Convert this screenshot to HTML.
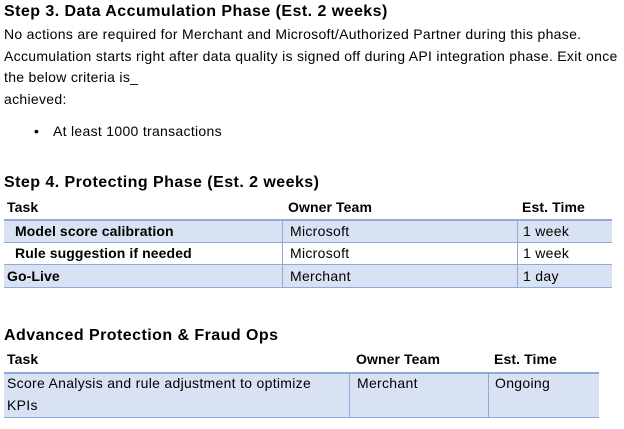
<!DOCTYPE html>
<html><head><meta charset="utf-8"><style>
body{margin:0;width:624px;height:429px;background:#fff;font-family:"Liberation Sans","DejaVu Sans",sans-serif;color:#000;position:relative;overflow:hidden}
.a{position:absolute;white-space:nowrap}
.h{font-weight:bold;font-size:16px;letter-spacing:0.45px}
.t{font-size:14px;letter-spacing:0.3px}
.b{font-weight:bold;font-size:14px;letter-spacing:0.1px}
.fill{position:absolute;background:#d9e2f3}
.hl{position:absolute;height:1px;background:#8eaadb}
.vl{position:absolute;width:1px;background:#8eaadb}
</style></head><body>
<div class="a h" style="left:4px;top:3px">Step 3. Data Accumulation Phase (Est. 2 weeks)</div>
<div class="a t" style="left:4px;top:26px">No actions are required for Merchant and Microsoft/Authorized Partner during this phase.</div>
<div class="a t" style="left:4px;top:48px">Accumulation starts right after data quality is signed off during API integration phase. Exit once</div>
<div class="a t" style="left:4px;top:69px">the below criteria is_</div>
<div class="a t" style="left:4px;top:91px">achieved:</div>
<div class="a t" style="left:34px;top:123px">•</div>
<div class="a t" style="left:53px;top:123px">At least 1000 transactions</div>

<div class="a h" style="left:4px;top:174px">Step 4. Protecting Phase (Est. 2 weeks)</div>
<div class="a b" style="left:7px;top:199px">Task</div>
<div class="a b" style="left:288px;top:199px">Owner Team</div>
<div class="a b" style="left:522px;top:199px">Est. Time</div>
<div class="fill" style="left:4px;top:220px;width:608px;height:67px"></div>
<div class="fill" style="left:4px;top:243px;width:608px;height:21px;background:#fff"></div>
<div class="hl" style="left:4px;top:219px;width:608px;height:2px"></div>
<div class="hl" style="left:4px;top:242px;width:608px"></div>
<div class="hl" style="left:4px;top:264px;width:608px"></div>
<div class="hl" style="left:4px;top:287px;width:608px"></div>
<div class="vl" style="left:282px;top:220px;height:67px"></div>
<div class="vl" style="left:517px;top:220px;height:67px"></div>
<div class="a b" style="left:15px;top:223px">Model score calibration</div>
<div class="a t" style="left:290px;top:223px">Microsoft</div>
<div class="a t" style="left:523px;top:223px">1 week</div>
<div class="a b" style="left:15px;top:245px">Rule suggestion if needed</div>
<div class="a t" style="left:290px;top:245px">Microsoft</div>
<div class="a t" style="left:523px;top:245px">1 week</div>
<div class="a b" style="left:7px;top:268px">Go-Live</div>
<div class="a t" style="left:290px;top:268px">Merchant</div>
<div class="a t" style="left:523px;top:268px">1 day</div>

<div class="a h" style="left:4px;top:327px">Advanced Protection &amp; Fraud Ops</div>
<div class="a b" style="left:7px;top:351px">Task</div>
<div class="a b" style="left:356px;top:351px">Owner Team</div>
<div class="a b" style="left:494px;top:351px">Est. Time</div>
<div class="fill" style="left:4px;top:373px;width:595px;height:44px"></div>
<div class="hl" style="left:4px;top:372px;width:595px;height:2px"></div>
<div class="hl" style="left:4px;top:417px;width:595px"></div>
<div class="vl" style="left:349px;top:373px;height:44px"></div>
<div class="vl" style="left:488px;top:373px;height:44px"></div>
<div class="a t" style="left:7px;top:375px">Score Analysis and rule adjustment to optimize</div>
<div class="a t" style="left:7px;top:397px">KPIs</div>
<div class="a t" style="left:357px;top:375px">Merchant</div>
<div class="a t" style="left:495px;top:375px">Ongoing</div>
</body></html>
